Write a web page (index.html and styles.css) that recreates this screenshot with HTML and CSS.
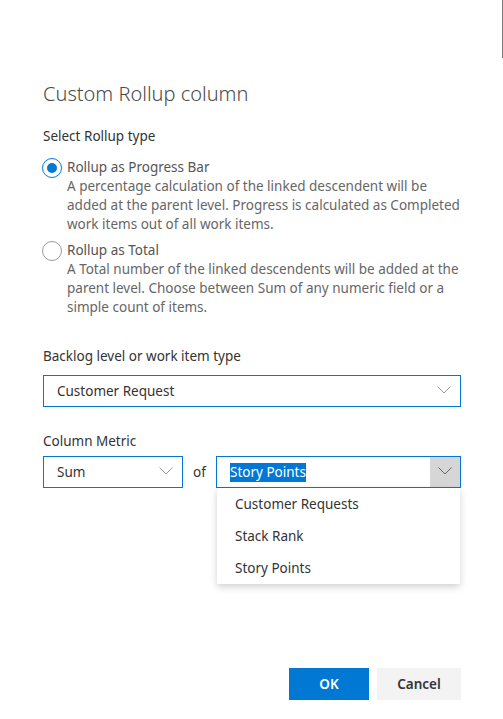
FILE: index.html
```html
<!DOCTYPE html>
<html>
<head>
<meta charset="utf-8">
<link rel="stylesheet" href="styles.css">
</head>
<body>
<div class="edge"></div>
<div class="dialog">
  <h1 class="title">Custom Rollup column</h1>
  <div class="label">Select Rollup type</div>
  <div class="options">
    <div class="option">
      <span class="radio checked"></span>
      <div class="option-text">
        <div class="option-title">Rollup as Progress Bar</div>
        <div class="option-desc">A percentage calculation of the linked descendent will be added at the parent level. Progress is calculated as Completed work items out of all work items.</div>
      </div>
    </div>
    <div class="option">
      <span class="radio"></span>
      <div class="option-text">
        <div class="option-title">Rollup as Total</div>
        <div class="option-desc">A Total number of the linked descendents will be added at the parent level. Choose between Sum of any numeric field or a simple count of items.</div>
      </div>
    </div>
  </div>

  <div class="label label-backlog">Backlog level or work item type</div>
  <div class="dropdown full">
    <span class="dd-text">Customer Request</span>
    <span class="chev"><svg width="14" height="8" viewBox="0 0 14 8"><path d="M0.5 0.5 L7 7 L13.5 0.5" fill="none" stroke="#999" stroke-width="1"/></svg></span>
  </div>

  <div class="label label-metric">Column Metric</div>
  <div class="metric-row">
    <div class="dropdown sum">
      <span class="dd-text">Sum</span>
      <span class="chev"><svg width="14" height="8" viewBox="0 0 14 8"><path d="M0.5 0.5 L7 7 L13.5 0.5" fill="none" stroke="#999" stroke-width="1"/></svg></span>
    </div>
    <span class="of">of</span>
    <div class="dropdown field">
      <span class="dd-text"><span class="selected">Story Points</span></span>
      <span class="chev active"><svg width="14" height="8" viewBox="0 0 14 8"><path d="M0.5 0.5 L7 7 L13.5 0.5" fill="none" stroke="#666" stroke-width="1"/></svg></span>
      <ul class="menu">
        <li>Customer Requests</li>
        <li>Stack Rank</li>
        <li>Story Points</li>
      </ul>
    </div>
  </div>

  <div class="footer">
    <button class="btn primary">OK</button>
    <button class="btn secondary">Cancel</button>
  </div>
</div>
</body>
</html>
```
FILE: styles.css
```css
html, body {
  margin: 0;
  padding: 0;
  background: #fff;
}
body {
  font-family: "Noto Sans", "Open Sans", sans-serif;
  color: #333;
  height: 719px;
  overflow: hidden;
  position: relative;
}
.edge {
  position: absolute;
  right: 0;
  top: 0;
  width: 1px;
  height: 58px;
  background: #777;
}
.dialog {
  height: 719px;
  box-sizing: border-box;
  padding: 80px 42px 19px 43px;
  display: flex;
  flex-direction: column;
}
.title {
  margin: 0;
  font-size: 20px;
  line-height: 28px;
  font-weight: 300;
  color: #4a4a4a;
}
.label {
  font-size: 13.5px;
  line-height: 20px;
  color: #333;
  margin-top: 18px;
}
.options {
  margin-top: 12px;
  display: flex;
  flex-direction: column;
  gap: 7px;
}
.option {
  display: flex;
  gap: 5px;
  align-items: flex-start;
}
.radio {
  width: 18px;
  height: 18px;
  border: 1px solid #9a9a9a;
  border-radius: 50%;
  box-sizing: content-box;
  flex: none;
  margin-left: -1px;
  position: relative;
}
.radio.checked {
  border-color: #0078d4;
}
.radio.checked::after {
  content: "";
  position: absolute;
  left: 4px;
  top: 4px;
  width: 10px;
  height: 10px;
  border-radius: 50%;
  background: #0078d4;
}
.option-text {
  font-size: 13.5px;
  line-height: 19px;
}
.option-title {
  color: #555;
}
.option-desc {
  color: #666;
}
.label-backlog {
  margin-top: 29px;
}
.dropdown {
  height: 32px;
  box-sizing: border-box;
  border: 1px solid #0078d4;
  display: flex;
  align-items: center;
  font-size: 13.5px;
  color: #333;
  position: relative;
}
.full {
  margin-top: 9px;
}
.dd-text {
  flex: 1;
  padding-left: 13px;
}
.chev {
  width: 30px;
  height: 30px;
  display: flex;
  align-items: center;
  justify-content: center;
  margin-right: 1px;
}
.chev svg {
  margin-top: -2px;
}
.label-metric {
  margin-top: 24px;
}
.metric-row {
  margin-top: 5px;
  display: flex;
  align-items: center;
}
.sum {
  width: 140px;
}
.of {
  font-size: 13.5px;
  color: #333;
  width: 33px;
  padding-left: 10px;
  box-sizing: border-box;
}
.field {
  flex: 1;
}
.field .dd-text {
  padding-left: 13px;
}
.selected {
  background: #0078d4;
  color: #fff;
  padding: 0 0 1px 0;
}
.chev.active {
  background: #d6d6d6;
  margin-right: 0;
}
.menu {
  position: absolute;
  left: 0;
  right: 0;
  top: 31px;
  margin: 0;
  padding: 0;
  list-style: none;
  background: #fff;
  box-shadow: 0 3px 7px rgba(0,0,0,0.18);
}
.menu li {
  height: 32px;
  line-height: 32px;
  padding-left: 18px;
  font-size: 13.5px;
  color: #333;
}
.footer {
  margin-top: auto;
  display: flex;
  justify-content: flex-end;
  gap: 8px;
}
.btn {
  height: 32px;
  border: none;
  font-family: inherit;
  font-size: 13.5px;
  font-weight: 600;
  padding: 0;
}
.primary {
  width: 80px;
  background: #0078d4;
  color: #fff;
}
.secondary {
  width: 84px;
  background: #f3f3f3;
  color: #333;
}
```
